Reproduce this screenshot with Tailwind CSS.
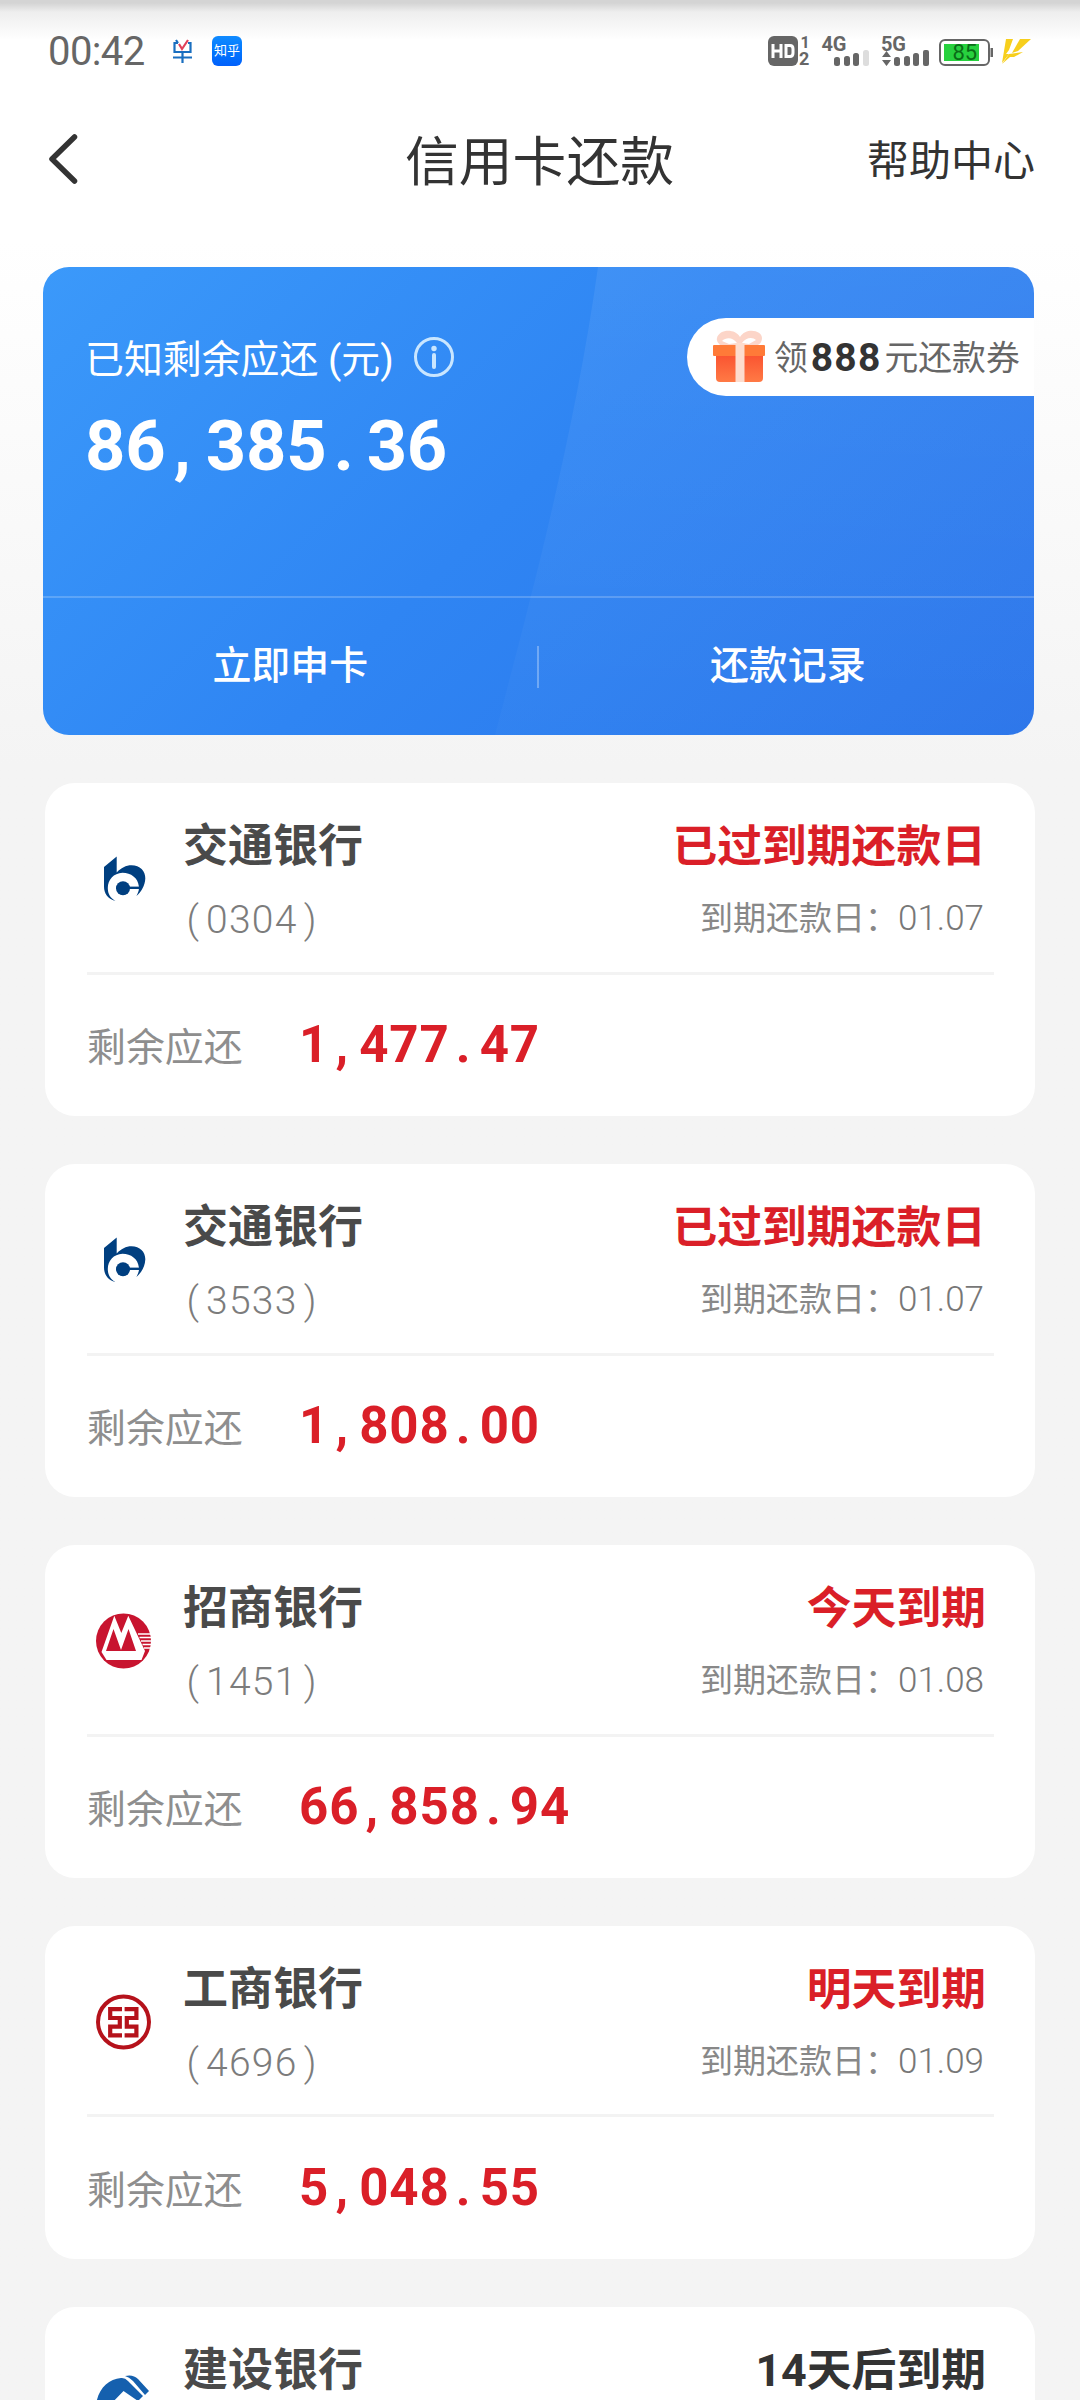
<!DOCTYPE html>
<html lang="zh-CN">
<head>
<meta charset="utf-8">
<title>信用卡还款</title>
<script src="https://cdn.jsdelivr.net/npm/@tailwindcss/browser@4"></script>
</head>
<body>
<div class="w-[1080px] h-[2400px] overflow-hidden bg-linear-to-b from-white from-[10%] to-[#f4f4f4] to-[32%] font-['Roboto','Noto_Sans_CJK_SC',sans-serif] text-[#333]">
<svg class="hidden">
  <symbol id="bocom" viewBox="0 0 56 56">
    <path fill="#003f80" d="M8 16 20.700 5.500V21.500C25 17 30 14.300 35.500 14.300C44 14.300 49.500 20 49.300 27.500C49 35 45 41 40.400 45C42.500 41 43.500 38 42.800 35C42 27 35 21.700 26.500 21.700C17.500 22 11.800 29 11.800 37C11.800 43 14.500 47 19.400 50C11.500 48 8 42 8 35.500Z"/>
    <circle cx="27" cy="37.200" r="7" fill="#003f80"/><path d="M27 36.800H43.500" stroke="#003f80" stroke-width="2.400"/>
  </symbol>
  <symbol id="cmb" viewBox="0 0 56 56">
    <circle cx="27.500" cy="28" r="27.500" fill="#c8142f"/>
    <path fill="#fff" d="M18.300 2.700 25.300 20 32.300 2.700 49 38 45.500 47H10.500L5.500 39Z"/>
    <path fill="#c8142f" d="M10 38 17.500 16 25 37 32.500 16 40 38Z"/>
    <path d="M42 21H55M43.500 24.500H56M45 28H56M46.500 31.500H56M48 35H55" stroke="#fff" stroke-width="1.500"/>
  </symbol>
  <symbol id="icbc" viewBox="0 0 56 56">
    <circle cx="27.500" cy="28" r="25.500" fill="none" stroke="#b5121b" stroke-width="4"/>
    <path fill="none" stroke="#b5121b" stroke-width="4.200" d="M26 15.200H14.200V24H23.800V32.600H14.200V41.300H26M28.600 15.200H40.400V24H30.800V32.600H40.400V41.300H28.600"/>
  </symbol>
  <symbol id="ccb" viewBox="0 0 56 56">
    <path fill="#1560ae" d="M0 30C2 14 12 4 25 3Q29 2.500 32 6L47 21 42 26 27.500 16 12 32Z"/>
    <path fill="#1560ae" d="M29 1Q37-1 42 4L53 16 49 20 37 6Q33 2 29 1Z"/>
  </symbol>
</svg>

<div class="h-[100px] bg-linear-to-b from-[#d4d4d4] from-[3%] via-[#eeeeee] via-[12%] to-white to-[40%] flex items-start pl-[48px] pr-[48px]">
  <div class="text-[40px] leading-[46px] mt-[29px] text-[#666] w-[125px] tracking-[-0.6px]">00:42</div>
  <svg class="mt-[39px] w-[19px] h-[26px]" viewBox="0 0 19 26" fill="none" stroke="#1a6fc0" stroke-width="2.2"><path d="M3 1 5 4M5 4H1.500V13H17.500V4H15M0 18.500H19M9.500 13V24"/><path stroke="#e0405a" d="M6 5 9 10 15 1"/></svg>
  <div class="ml-[20px] mt-[36px] w-[30px] h-[30px] rounded-[6px] bg-linear-to-b from-[#118bff] to-[#0360fb] text-white text-[13px] leading-[30px] text-center">知乎</div>
  <svg class="ml-auto mt-[32px] w-[270px] h-[40px]" viewBox="762 32 270 40" font-family="Roboto" fill="#666">
    <rect x="768" y="36" width="30" height="30" rx="6"/>
    <path d="M773 44V58M773 51H781M781 44V58M786 45.500V56.500H790Q793 56.500 793 53V49Q793 45.500 790 45.500Z" fill="none" stroke="#fff" stroke-width="3"/>
    <text x="800.500" y="48" font-size="16" font-weight="700">1</text><text x="799" y="65" font-size="18" font-weight="700">2</text>
    <text x="821.500" y="51" font-size="20" font-weight="700" textLength="25">4G</text>
    <rect x="834" y="57" width="6" height="9" rx="2.500"/><rect x="844" y="56" width="6" height="10" rx="2.500"/><rect x="853" y="53" width="6" height="13" rx="2.500"/><rect x="863" y="50" width="6" height="16" rx="2.500" fill="#ddd"/>
    <text x="881" y="51" font-size="20" font-weight="700" textLength="25">5G</text>
    <path d="M882 57 886.500 51 891 57ZM882 60H891L886.500 66Z"/>
    <rect x="894" y="57" width="6" height="9" rx="2.500"/><rect x="904" y="56" width="6" height="10" rx="2.500"/><rect x="913" y="53" width="6" height="13" rx="2.500"/><rect x="923" y="50" width="6" height="16" rx="2"/>
    <rect x="940" y="40" width="49" height="25" rx="5" fill="#fff" stroke="#666" stroke-width="2"/>
    <rect x="944" y="44" width="35" height="17" fill="#27d13e"/><path d="M990.500 48H993V57H990.500Z"/>
    <text x="952.500" y="60" font-size="22" font-weight="400" fill="#0a6d17">85</text>
    <path fill="#f7cf1d" d="M1006 39H1013L1009 50 1006 54H1009L1002 63Z"/><path fill="#f7cf1d" d="M1020 39H1031L1018 51 1012 53Z"/><path fill="#f7cf1d" d="M1009 54 1023 52 1014 57 1010 57 1002 64Z"/>
  </svg>
</div>

<header class="h-[120px] flex items-center justify-between pl-[48px] pr-[45px]">
  <svg class="w-[164px] h-[54px]" viewBox="0 0 164 54" fill="none" stroke="#333" stroke-width="5.500" stroke-linecap="round" stroke-linejoin="round"><path d="M26.500 4 4 26 26.500 48"/></svg>
  <h1 class="text-[53.8px] leading-[80px] pt-[6px]">信用卡还款</h1>
  <div class="text-[42px] leading-[60px] pt-[3px]">帮助中心</div>
</header>

<main class="pl-[43px] pr-[45px] pt-[47px]">
  <section class="relative h-[468px] w-[991px] rounded-[26px] overflow-hidden bg-linear-135 from-[#3b99fa] via-[#2f85f3] via-[48%] to-[#2a74ea] flex flex-col text-white">
    <svg class="absolute inset-0 w-[991px] h-[468px]" viewBox="0 0 991 468"><defs><linearGradient id="sheen" x1="0" y1="0" x2="0" y2="1"><stop offset="0" stop-color="#fff" stop-opacity=".07"/><stop offset="1" stop-color="#fff" stop-opacity=".02"/></linearGradient></defs><path d="M555 0H991V468H452C480 360 530 180 555 0Z" fill="url(#sheen)"/></svg>
    <div class="relative h-[329px] flex justify-between">
      <div class="pl-[42px] pt-[62px]">
        <div class="flex items-center gap-[21px] h-[56px]"><span class="w-[307px] whitespace-nowrap text-[38.9px] pt-[6px]">已知剩余应还 (元)</span>
          <svg class="w-[42px] h-[42px]" viewBox="0 0 42 42" fill="none" stroke="#c9e6ff" stroke-width="3"><circle cx="21" cy="21" r="18.500"/><path d="M21 19V31" stroke-width="4" stroke-linecap="round"/><circle cx="21" cy="12.500" r="2.700" fill="#c9e6ff" stroke="none"/></svg>
        </div>
        <div class="text-[70.5px] leading-[84px] mt-[19px] font-bold tracking-[-0.2px] flex">86<span class="w-[40.2px] pr-[7px] text-center">,</span>385<span class="w-[40.2px] pr-[6px] text-center">.</span>36</div>
      </div>
      <div class="mt-[51px] h-[78px] w-[347px] rounded-l-full bg-white flex items-center pl-[25px] text-[33.8px] text-[#666] whitespace-nowrap">
        <svg class="w-[54px] h-[54px] mr-[8px]" viewBox="0 0 54 54"><defs><linearGradient id="box" x1="0" y1="0" x2="0" y2="1"><stop offset="0" stop-color="#fa5230"/><stop offset="1" stop-color="#ff7a45"/></linearGradient></defs>
          <path fill="#fcd5c8" d="M28 7C34-3 50 0 50 8Q50 13 46 15H8Q4 12 5 8C7-1 23-2 28 7Z"/><path fill="#fff" d="M25 13C21 7 14 7 10 11L17 14ZM30 13C34 7 41 7 44 10L37 14Z"/>
          <path fill="url(#box)" d="M4 24H51V48Q51 52 47 52H8Q4 52 4 48Z"/><rect x="1" y="15" width="52" height="11" rx="1" fill="#ff7a38"/><rect x="23.500" y="13" width="9" height="39" fill="#fddccd"/></svg>
        <span class="pt-[4px]">领</span><span class="text-[39px] font-bold text-[#333] tracking-[1.2px] mx-[3px] pt-[2px]">888</span><span class="pt-[4px]">元还款券</span>
      </div>
    </div>
    <div class="relative flex-1 border-t-2 border-white/20 flex items-center text-[38.9px] font-medium text-center">
      <div class="flex-1 pl-px">立即申卡</div><div class="w-[2px] h-[42px] bg-white/30"></div><div class="flex-1 pl-[3px]">还款记录</div>
    </div>
  </section>

  <div id="cards" class="pl-[2px] pt-[48.3px] flex flex-col gap-[48.3px]"></div>
</main>
</div>

<script>
const cards = [
  ['bocom', '交通银行', '0304', '已过到期还款日', '01.07', '1,477.47'],
  ['bocom', '交通银行', '3533', '已过到期还款日', '01.07', '1,808.00'],
  ['cmb', '招商银行', '1451', '今天到期', '01.08', '66,858.94'],
  ['icbc', '工商银行', '4696', '明天到期', '01.09', '5,048.55'],
  ['ccb', '建设银行', '', '14天后到期', '', ''],
];
document.getElementById('cards').innerHTML = cards.map(([logo, name, no, status, date, amount]) => `
<article class="w-[990px] h-[332.6px] shrink-0 rounded-[30px] bg-white px-[42px]">
  <div class="h-[191.5px] w-[907px] border-b-3 border-[#f3f3f3] flex pl-[9px] pr-[8px]">
    <svg class="w-[56px] h-[56px] mt-[68px]"><use href="#${logo}"/></svg>
    <div class="ml-[31px]">
      <div class="mt-[31px] h-[66px] leading-[66px] text-[45px] font-bold text-[#4a4a4a]">${name}</div>
      ${no && `<div class="mt-[15px] h-[50px] leading-[50px] text-[39px] font-light text-[#7c7c7c] tracking-[1.3px] flex"><span class="w-[23px] pr-[2px] text-center">(</span>${no}<span class="w-[23px] pl-[3px] text-center">)</span></div>`}
    </div>
    <div class="ml-auto text-right">
      <div class="mt-[31px] h-[66px] leading-[66px] text-[44.8px] font-bold ${date ? 'text-[#da1f28]' : 'text-[#333]'}">${status}</div>
      ${date && `<div class="mt-[14px] h-[50px] leading-[50px] text-[33px] pr-[2px] text-[#888] whitespace-nowrap">到期还款日：<span class="text-[35px] font-light text-[#777]">${date}</span></div>`}
    </div>
  </div>
  ${amount && `<div class="h-[141px] flex items-center"><div class="text-[38.9px] text-[#8e8e8e] w-[212px] pt-[6px]">剩余应还</div><div class="text-[51px] font-bold text-[#da1f28] tracking-[0.9px] flex">${amount.replace(',', '<span class="w-[30px] pr-[4px] text-center">,</span>').replace(/\.(\d+)$/, '<span class="w-[30px] pr-[2px] text-center">.</span>$1')}</div></div>`}
</article>`).join('');
</script>
</body>
</html>
